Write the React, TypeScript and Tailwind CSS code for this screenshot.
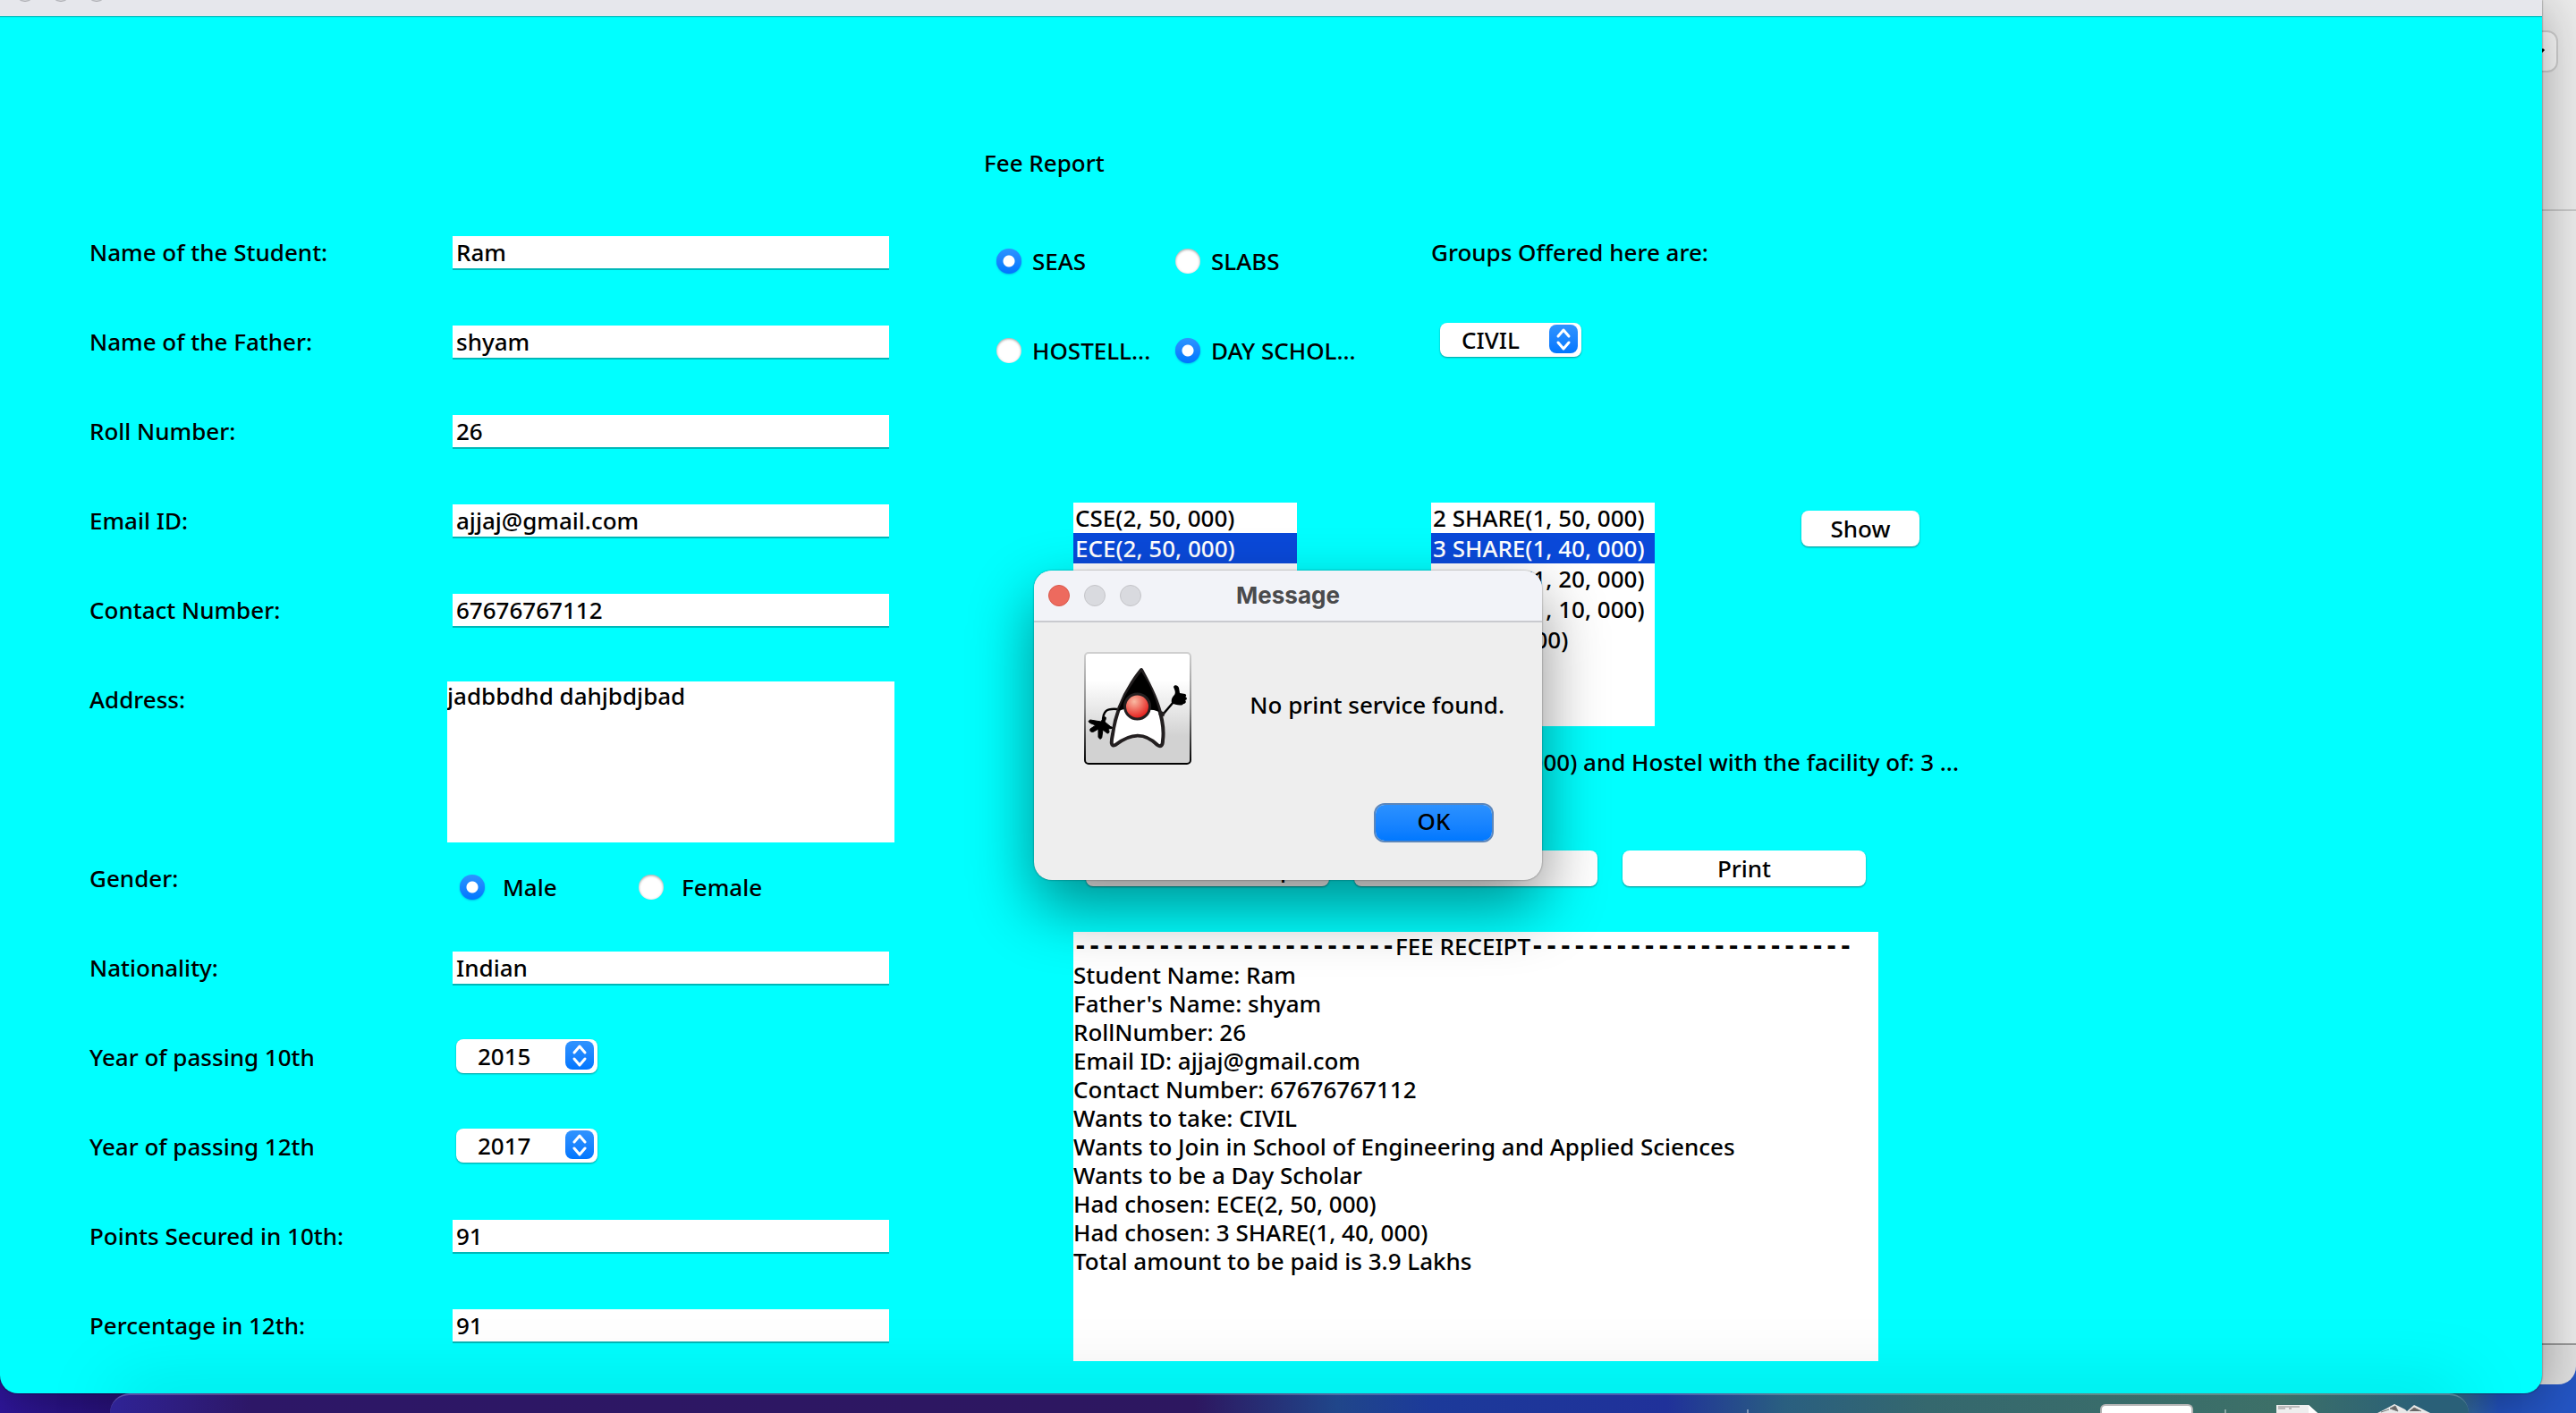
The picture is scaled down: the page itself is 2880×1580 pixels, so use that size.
import React from "react";

const fields = {
  top: [
    { id: "student", label: "Name of the Student:", value: "Ram" },
    { id: "father", label: "Name of the Father:", value: "shyam" },
    { id: "roll", label: "Roll Number:", value: "26" },
    { id: "email", label: "Email ID:", value: "ajjaj@gmail.com" },
    { id: "contact", label: "Contact Number:", value: "67676767112" },
  ],
  bottom: [
    { id: "points10", label: "Points Secured in 10th:", value: "91" },
    { id: "percent12", label: "Percentage in 12th:", value: "91" },
  ],
};

const receipt = [
  "Student Name: Ram",
  "Father's Name: shyam",
  "RollNumber: 26",
  "Email ID: ajjaj@gmail.com",
  "Contact Number: 67676767112",
  "Wants to take: CIVIL",
  "Wants to Join in School of Engineering and Applied Sciences",
  "Wants to be a Day Scholar",
  "Had chosen: ECE(2, 50, 000)",
  "Had chosen: 3 SHARE(1, 40, 000)",
  "Total amount to be paid is 3.9 Lakhs",
].join("\n");

const rule = "-----------------------";

function Row({ id, label, children }: { id?: string; label: string; children: React.ReactNode }) {
  return (
    <div className="grid h-[100px] grid-cols-[100fr_400fr_500fr_100fr] items-center">
      <label htmlFor={id} className="col-start-2 whitespace-nowrap">
        {label}
      </label>
      <div>{children}</div>
    </div>
  );
}

function TextRow({ id, label, value }: { id: string; label: string; value: string }) {
  return (
    <Row id={id} label={label}>
      <div className="px-1.5">
        <input
          id={id}
          defaultValue={value}
          className="block h-9 w-full bg-white px-1 shadow-[0_2px_0_#00b8b8] outline-none"
        />
      </div>
    </Row>
  );
}

function Radio({ name, label, on, wide }: { name: string; label: string; on?: boolean; wide?: boolean }) {
  return (
    <label className={`flex items-center pl-3.5 whitespace-nowrap ${wide ? "gap-5" : "gap-3"}`}>
      <input
        type="radio"
        name={name}
        defaultChecked={on}
        className="size-7 shrink-0 appearance-none rounded-full bg-white shadow-[inset_0_1px_3px_rgba(0,0,0,0.4)] checked:bg-[radial-gradient(circle,#fff_0_6px,transparent_7px),linear-gradient(#2f93ff,#0076ff)] checked:shadow-[0_1px_2px_rgba(0,90,200,0.4)]"
      />
      {label}
    </label>
  );
}

function Dropdown({ id, value }: { id: string; value: string }) {
  return (
    <div className="relative ml-2.5 w-[158px]">
      <select
        id={id}
        className="block h-[38px] w-full appearance-none rounded-lg bg-white pl-6 shadow-[0_1px_2px_rgba(0,0,0,0.4)] outline-none"
      >
        <option>{value}</option>
      </select>
      <span className="pointer-events-none absolute top-0.5 right-1 flex h-8 w-8 items-center justify-center rounded-lg bg-linear-to-b from-[#2f93ff] to-[#0076ff]">
        <svg viewBox="0 0 32 32" className="size-8" fill="none" stroke="#fff" strokeWidth="3" strokeLinecap="round" strokeLinejoin="round">
          <path d="M10 13l6-7 6 7M10 20l6 7 6-7" />
        </svg>
      </span>
    </div>
  );
}

function ListBox({ label, items, selected }: { label: string; items: string[]; selected: number }) {
  return (
    <ul role="listbox" aria-label={label} className="h-[250px] w-[250px] overflow-hidden bg-white">
      {items.map((item, i) => (
        <li
          key={item}
          role="option"
          aria-selected={i === selected}
          className={`h-[34px] px-0.5 leading-[34px] whitespace-nowrap ${i === selected ? "bg-[#0a49d9] text-white" : ""}`}
        >
          {item}
        </li>
      ))}
    </ul>
  );
}

function PushButton({ children, className }: { children: string; className: string }) {
  return (
    <button className={`h-10 rounded-lg bg-white leading-10 shadow-[0_1px_2px_rgba(0,0,0,0.45)] ${className}`}>
      {children}
    </button>
  );
}

function Duke() {
  return (
    <svg viewBox="0 0 120 126" className="h-[126px] w-[120px]" aria-hidden="true">
      <defs>
        <linearGradient id="tile" x1="0" y1="0" x2="0" y2="1">
          <stop offset="0.25" stopColor="#fff" />
          <stop offset="0.75" stopColor="#d2d2d2" />
        </linearGradient>
        <linearGradient id="rim" x1="0" y1="0" x2="0" y2="1">
          <stop offset="0" stopColor="#cfcfcf" />
          <stop offset="0.5" stopColor="#888" />
          <stop offset="1" stopColor="#000" />
        </linearGradient>
        <radialGradient id="nose" cx="0.38" cy="0.3" r="0.75">
          <stop offset="0" stopColor="#f9b9a2" />
          <stop offset="0.9" stopColor="#e5201d" />
        </radialGradient>
      </defs>
      <rect x="1" y="1" width="118" height="124" rx="4" fill="url(#tile)" stroke="url(#rim)" strokeWidth="2" />
      <path d="M37 64C25 63 21 66 21 78M21 80l10 5" fill="none" stroke="#000" strokeWidth="2.5" />
      <path d="M30 84l-7-6c2-4 2-6-1-5l-3 5-12-2c-3 1-2 3 1 4l5 2-6 4c-1 3 1 4 4 3l5-3v9c1 3 4 3 4-1l1-7 5 4c3 0 2-3 1-5l6-1z" fill="#000" stroke="#000" strokeWidth="1" />
      <path d="M88 70l12-14" stroke="#000" strokeWidth="2.5" />
      <path d="M98 57c-1-4 1-7 3-9 2-3 0-6-1-9 1-3 5-2 6 1l1 6 6 1c2 1 1 3 0 3 3 1 2 4 0 4 2 2 0 4-2 4-1 3-10 1-13-1z" fill="#000" />
      <path d="M64 20C48 40 36 62 32 92c-2 10-2 14 3 12 18-14 33-14 47 0 4 3 6 0 6-5 2-14-1-26-5-38C78 45 71 33 64 20z" fill="#fff" stroke="#231f20" strokeWidth="4" strokeLinejoin="round" />
      <path d="M64 22C53 36 44 51 38 66l10-3 30 2 6 2C78 45 72 34 64 22z" fill="#000" />
      <path d="M84 68l6 2" stroke="#231f20" strokeWidth="5" />
      <circle cx="59.500" cy="61" r="14" fill="url(#nose)" stroke="#231f20" strokeWidth="3" />
    </svg>
  );
}

function MessageDialog() {
  return (
    <div
      role="dialog"
      aria-label="Message"
      className="absolute top-[638px] left-[1156px] z-20 w-[568px] overflow-hidden rounded-[20px] bg-[#eeeeee] shadow-[0_0_2px_rgba(0,0,0,0.5),0_30px_70px_rgba(0,0,0,0.45)]"
    >
      <div className="grid h-[58px] grid-cols-[1fr_auto_1fr] items-center border-b-2 border-[#c9cacf] bg-[#f2f3f8] px-4">
        <div className="flex gap-4">
          <button aria-label="Close" className="size-6 rounded-full border border-[#d8594c] bg-[#ed6a5e]" />
          <button aria-label="Minimize" className="size-6 rounded-full border border-[#c4c4c8] bg-[#d9dadf]" />
          <button aria-label="Zoom" className="size-6 rounded-full border border-[#c4c4c8] bg-[#d9dadf]" />
        </div>
        <h2 className="font-['Inter',sans-serif] text-[26px] font-bold text-[#4a4a4c]">Message</h2>
      </div>
      <div className="flex justify-between pt-[33px] pr-[42px] pl-14">
        <Duke />
        <p className="pt-2 leading-[102px] whitespace-nowrap">No print service found.</p>
      </div>
      <div className="flex justify-end px-14 pt-[45px] pb-11">
        <button className="h-10 w-[130px] rounded-[10px] bg-linear-to-b from-[#2b91ff] to-[#0078ff] pb-1 leading-9 shadow-[0_0_0_2px_#5b86bb]">
          OK
        </button>
      </div>
    </div>
  );
}

function BackWindow() {
  return (
    <div className="absolute top-0 right-0 flex h-[1548px] w-24 flex-col overflow-hidden rounded-br-[20px] bg-[#ececec]">
      <div className="h-[236px] border-b-2 border-[#c9c9c9] pt-[34px] pr-5">
        <div className="flex h-[47px] items-center justify-end rounded-[12px] border-2 border-[#d0d0d0] bg-[#fafafa] pr-3">
          <svg viewBox="0 0 16 12" className="w-4" fill="none" stroke="#000" strokeWidth="3">
            <path d="M2 3l6 6 6-6" />
          </svg>
        </div>
      </div>
      <div className="flex-1" />
      <div className="h-[46px] border-t-2 border-[#999] bg-black/5" />
    </div>
  );
}

function Dock() {
  return (
    <div className="relative z-10 mr-[120px] ml-[123px] flex h-[22px] items-end justify-end gap-[35px] overflow-visible rounded-t-[44px] border-t-2 border-white/20 bg-[linear-gradient(90deg,#2f2396_0%,#2d1767_6%,#2d1760_46%,#20468a_52%,#1c3a9a_56%,#20319a_66%,#2a5f80_71%,#35686e_77%,#3d7068_92%,#2a6078_98%)] pr-[38px] shadow-[0_0_80px_rgba(0,0,0,0.26)]">
      <div className="mr-[358px] h-1 w-0.5 bg-white/40" />
      <div className="h-2.5 w-[104px] rounded-t-md border-x-2 border-t-2 border-[#b5b5b5] bg-white" />
      <div className="h-1 w-0.5 bg-white/40" />
      <svg viewBox="0 0 46 10" className="ml-[21px] h-2.5 w-[46px]">
        <path d="M0 10V1h36l10 9z" fill="#eee" />
        <path d="M36 1v9h10z" fill="#fff" />
        <path d="M2 3h24M2 5h8M14 5h3" stroke="#888" />
      </svg>
      <svg viewBox="0 0 66 10" className="ml-[30px] h-2.5 w-[66px]">
        <path d="M2 10l10-5 9-5 12 6 2 2 8-7 18 9z" fill="#e8e8e8" />
        <path d="M16 5l6-3 3 6zM38 8l5-4 8 4M6 9l9-3" fill="#666" stroke="#777" />
      </svg>
    </div>
  );
}

export default function App() {
  return (
    <div className="relative min-h-screen overflow-hidden bg-[linear-gradient(90deg,#2f169c_0%,#26106a_8%,#1d0e50_50%,#35686e_75%,#3f7c8e_95%,#2455c4_97%)] font-['Noto_Sans','Open_Sans',sans-serif] text-[26px] leading-8 font-medium text-black">
      <BackWindow />
      <main className="relative mr-[38px] overflow-hidden rounded-b-[20px] bg-[#00ffff] pb-[26px] shadow-[0_0_2px_rgba(0,0,0,0.7),0_10px_60px_rgba(0,0,0,0.35)]">
        <header className="flex h-[18px] items-start gap-4 bg-[#e6e7ec] pl-4 shadow-[0_1px_1px_rgba(0,0,0,0.25)]">
          <span className="-mt-[22px] size-6 rounded-full border border-[#aaabb0] bg-[#d3d4d8]" />
          <span className="-mt-[22px] size-6 rounded-full border border-[#aaabb0] bg-[#d3d4d8]" />
          <span className="-mt-[22px] size-6 rounded-full border border-[#aaabb0] bg-[#d3d4d8]" />
        </header>
        <form className="flex pt-[114px]" onSubmit={(e) => e.preventDefault()}>
          <section className="min-w-0 flex-[1100] pt-[100px]">
            {fields.top.map((f) => (
              <TextRow key={f.id} {...f} />
            ))}
            <div className="grid h-[200px] grid-cols-[100fr_400fr_500fr_100fr] items-start">
              <label htmlFor="address" className="col-start-2 leading-[100px]">
                Address:
              </label>
              <textarea
                id="address"
                defaultValue="jadbbdhd dahjbdjbad"
                className="mt-[30px] block h-[180px] w-full resize-none bg-white outline-none"
              />
            </div>
            <Row label="Gender:">
              <div className="grid grid-cols-[200px_1fr] pt-5">
                <Radio name="gender" label="Male" on wide />
                <Radio name="gender" label="Female" wide />
              </div>
            </Row>
            <TextRow id="nationality" label="Nationality:" value="Indian" />
            <Row id="year10" label="Year of passing 10th">
              <div className="pb-0.5">
                <Dropdown id="year10" value="2015" />
              </div>
            </Row>
            <Row id="year12" label="Year of passing 12th">
              <div className="pb-0.5">
                <Dropdown id="year12" value="2017" />
              </div>
            </Row>
            {fields.bottom.map((f) => (
              <TextRow key={f.id} {...f} />
            ))}
          </section>

          <section className="min-w-0 flex-[1742]">
            <h1 className="leading-[100px]">Fee Report</h1>
            <div className="flex">
              <div className="grid w-[500px] auto-rows-[100px] grid-cols-[200px_200px] items-center">
                <div className="pt-5">
                  <Radio name="school" label="SEAS" on />
                </div>
                <div className="pt-5">
                  <Radio name="school" label="SLABS" />
                </div>
                <div className="pt-5">
                  <Radio name="stay" label="HOSTELL..." />
                </div>
                <div className="pt-5">
                  <Radio name="stay" label="DAY SCHOL..." on />
                </div>
              </div>
              <div>
                <label htmlFor="group" className="block leading-[100px]">
                  Groups Offered here are:
                </label>
                <div className="h-[100px] pt-[29px]">
                  <Dropdown id="group" value="CIVIL" />
                </div>
              </div>
            </div>
            <div className="flex items-start pt-[130px] pl-[100px]">
              <ListBox
                label="Course"
                items={["CSE(2, 50, 000)", "ECE(2, 50, 000)", "EEE(2, 50, 000)"]}
                selected={1}
              />
              <div className="w-[150px]" />
              <ListBox
                label="Hostel share"
                items={[
                  "2 SHARE(1, 50, 000)",
                  "3 SHARE(1, 40, 000)",
                  "4 SHARE(1, 20, 000)",
                  "5 SHARE(1, 10, 000)",
                  "AC: (90, 000)",
                ]}
                selected={1}
              />
              <PushButton className="mt-[9px] ml-[164px] w-[132px]">Show</PushButton>
            </div>
            <p className="ml-[100px] w-[990px] text-right leading-[80px] whitespace-nowrap">
              Had chosen the course: ECE(2, 50, 000) and Hostel with the facility of: 3 ...
            </p>
            <div className="flex gap-7 pt-[59px] pl-[114px]">
              <PushButton className="w-[272px]">Generate Receipt</PushButton>
              <PushButton className="w-[272px]">Reset</PushButton>
              <PushButton className="w-[272px]">Print</PushButton>
            </div>
            <div className="pt-[51px] pl-[100px]">
              <div className="w-[900px] bg-white">
                <h2 className="flex h-8 whitespace-nowrap">
                  <span className="font-['DejaVu_Sans_Mono',monospace] font-bold">{rule}</span>
                  <span>FEE RECEIPT</span>
                  <span className="font-['DejaVu_Sans_Mono',monospace] font-bold">{rule}</span>
                </h2>
                <textarea
                  aria-label="Fee receipt"
                  defaultValue={receipt}
                  className="block h-[448px] w-full resize-none leading-8 whitespace-pre outline-none"
                />
              </div>
            </div>
          </section>
        </form>
      </main>
      <MessageDialog />
      <Dock />
    </div>
  );
}
